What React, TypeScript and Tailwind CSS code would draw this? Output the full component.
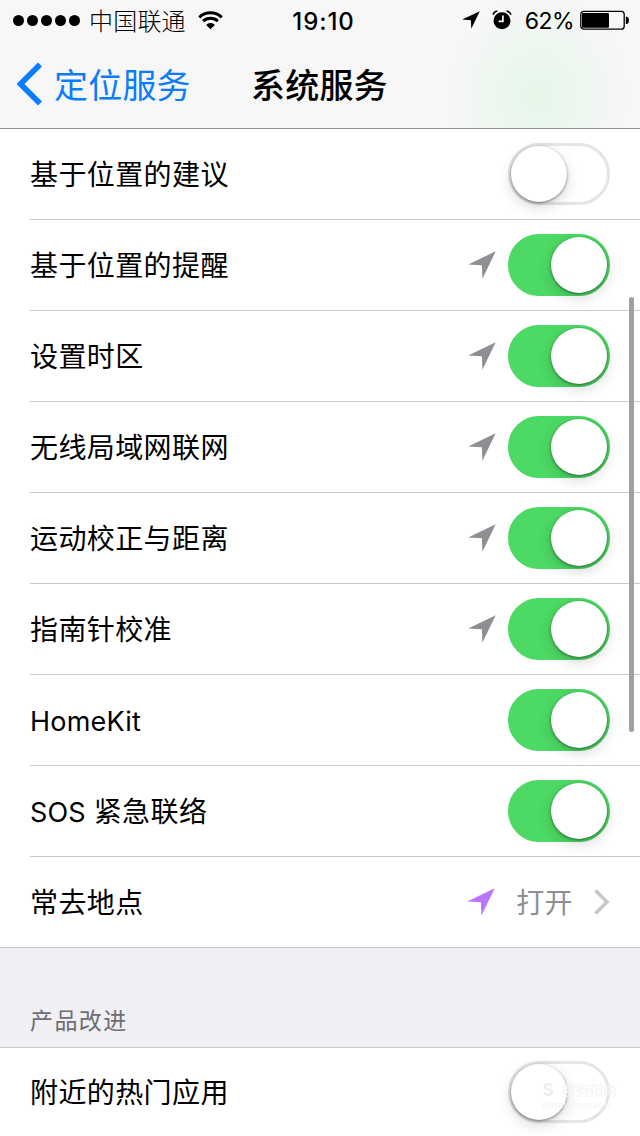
import { useState } from "react";
import clsx from "clsx";

interface Service {
  name: string;
  on: boolean;
  recent?: boolean;
}

const services: Service[] = [
  { name: "基于位置的建议", on: false },
  { name: "基于位置的提醒", on: true, recent: true },
  { name: "设置时区", on: true, recent: true },
  { name: "无线局域网联网", on: true, recent: true },
  { name: "运动校正与距离", on: true, recent: true },
  { name: "指南针校准", on: true, recent: true },
  { name: "HomeKit", on: true },
  { name: "SOS 紧急联络", on: true },
];

function LocationArrow({ className }: { className?: string }) {
  return (
    <svg className={className} viewBox="0 0 28 28" fill="currentColor">
      <path d="M0.2 13.4L27.7 0.3L14.4 27.7L13.9 14.2Z" />
    </svg>
  );
}

function Toggle({ initial }: { initial: boolean }) {
  const [on, setOn] = useState(initial);

  return (
    <button
      role="switch"
      aria-checked={on}
      onClick={() => setOn(!on)}
      className={clsx(
        "flex h-[62px] w-[102px] shrink-0 items-center rounded-full border-[3px]",
        on ? "justify-end border-[#4cd964] bg-[#4cd964]" : "justify-start border-[#e5e5e5] bg-white"
      )}
    >
      <span className="size-[56px] rounded-full bg-white shadow-[0_1px_3px_rgba(0,0,0,0.45),0_5px_14px_rgba(0,0,0,0.16)]" />
    </button>
  );
}

// Latin words are set tighter than the Chinese ones
function Label({ text }: { text: string }) {
  return (
    <span className="flex-1 pt-[2px]">
      {text.split(/([A-Za-z]+ ?)/).map((part, i) =>
        i % 2 ? (
          <span key={i} className="text-[27px] tracking-[0.2px]">
            {part}
          </span>
        ) : (
          part
        )
      )}
    </span>
  );
}

function Row({ service }: { service: Service }) {
  return (
    <li className="ml-[30px] flex h-[91px] items-center border-b border-[#c8c7cc] pr-[30px]">
      <Label text={service.name} />
      {service.recent && <LocationArrow className="mr-3 size-7 text-[#8e8e93]" />}
      <Toggle initial={service.on} />
    </li>
  );
}

function StatusBar() {
  return (
    <div className="grid h-10 grid-cols-[1fr_auto_1fr] items-center pl-[13px] pr-[11px] text-[24px] leading-none">
      <div className="flex items-center">
        <div className="flex gap-[3px]">
          {[0, 1, 2, 3, 4].map((i) => (
            <span key={i} className="size-[11px] rounded-full bg-black" />
          ))}
        </div>
        <span className="ml-[9px] pt-[3px] font-light tracking-[0.2px]">中国联通</span>
        <svg className="ml-3 h-[19px] w-[25px]" viewBox="0 0 25 19" fill="none" stroke="black">
          <path d="M1.3 6.3C7.5 0.3 17.5 0.3 23.7 6.3" strokeWidth="3" />
          <path d="M5.1 10.1C9.2 6.2 15.8 6.2 19.9 10.1" strokeWidth="2.9" />
          <path d="M8.2 13.9C10.7 11.5 14.3 11.5 16.8 13.9L12.5 18.3Z" fill="black" stroke="none" />
        </svg>
      </div>
      <span className="pl-[5px] pt-[3px] font-medium tracking-[0.9px]">19:10</span>
      <div className="flex items-center justify-end">
        <LocationArrow className="mr-3 size-[18px]" />
        <svg className="mr-[13px] size-5" viewBox="0 0 20 20">
          <circle cx="10" cy="10.7" r="8.5" />
          <path d="M1 4.6A6 6 0 0 1 5.4 1M19 4.6A6 6 0 0 0 14.6 1" fill="none" stroke="black" strokeWidth="1.6" />
          <path d="M10.9 5.5V11.3H6.6" fill="none" stroke="white" strokeWidth="1.7" />
        </svg>
        <span className="mr-[6px] pt-[2px] text-[23px] tracking-[-0.5px]">62%</span>
        <svg className="h-5 w-[49px]" viewBox="0 0 49 20">
          <rect x="0.8" y="1.3" width="43.4" height="17.9" rx="3" fill="none" stroke="black" strokeWidth="1.3" />
          <rect x="2" y="3" width="27" height="14.8" rx="1" />
          <path d="M45.8 6.7H47Q49 7.2 49 10.2Q49 13.4 47 13.9H45.8Z" />
        </svg>
      </div>
    </div>
  );
}

export default function App() {
  return (
    <div className="relative h-[1136px] w-[640px] overflow-hidden bg-white font-['Inter','Noto_Sans_CJK_SC',sans-serif] text-[28px] tracking-[0.4px] text-black">
      <header className="h-[129px] border-b border-[#929294] bg-[#f7f7f7] bg-[radial-gradient(ellipse_90px_105px_at_538px_96px,#e5f6e9_0%,#f7f7f7_100%)] tracking-normal">
        <StatusBar />
        <div className="grid h-[88px] grid-cols-[235px_auto] items-center pl-4 text-[34px] tracking-[0.2px]">
          <button className="flex items-center text-[#0a7cff]">
            <svg className="mr-[11px] h-[44px] w-[27px]" viewBox="0 0 27 44" fill="none" stroke="currentColor" strokeWidth="5.6">
              <path d="M24 2.5L4.5 22L24 41.5" />
            </svg>
            <span className="pt-[2px]">定位服务</span>
          </button>
          <h1 className="pt-[2px] font-medium">系统服务</h1>
        </div>
      </header>

      <ul>
        {services.map((s) => (
          <Row key={s.name} service={s} />
        ))}
        <li className="flex h-[91px] items-center border-b border-[#c8c7cc] pl-[30px] pr-[30px]">
          <Label text="常去地点" />
          <LocationArrow className="mr-[21px] size-7 text-[#bb75fa]" />
          <span className="pt-[2px] text-[#8e8e93]">打开</span>
          <svg className="ml-[21px] h-[26px] w-4" viewBox="0 0 16 26" fill="none" stroke="#c7c7cc" strokeWidth="3.6">
            <path d="M1.5 1.5L13 13L1.5 24.5" />
          </svg>
        </li>
      </ul>

      <h2 className="flex h-[100px] items-end border-b border-[#c8c7cc] bg-[#efeff4] pb-[9px] pl-[30px] text-[23px] tracking-[1.4px] text-[#6d6d72]">
        产品改进
      </h2>
      <ul>
        <li className="flex h-[88px] items-center px-[30px]">
          <Label text="附近的热门应用" />
          <Toggle initial={false} />
        </li>
      </ul>

      {/* Watermark */}
      <div className="pointer-events-none absolute left-[541px] top-[1080px] flex w-[76px] flex-col tracking-normal text-[#f4f4f4]">
        <div className="flex items-center gap-[6px] text-[14px] leading-[20px]">
          <span className="w-[14px] text-center text-[17px] font-bold text-[#eeeeee]">S</span>
          <span>搜狗指南</span>
        </div>
        <span className="text-[8px] leading-[10px]">zhinan.sogou.com</span>
      </div>

      {/* Scroll indicator */}
      <div className="absolute left-[629px] top-[297px] h-[435px] w-[5px] rounded-full bg-[#a0a0a0]" />
    </div>
  );
}
